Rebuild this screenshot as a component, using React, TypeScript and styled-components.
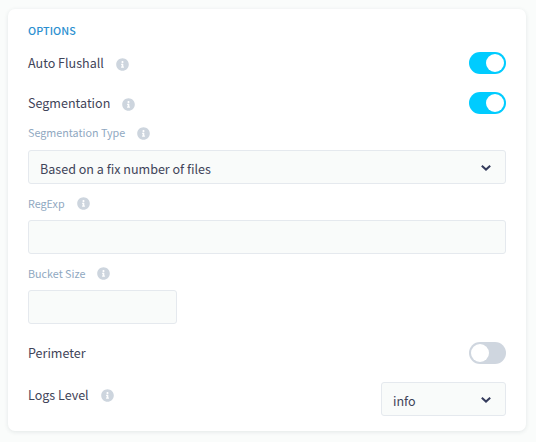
import React from "react";
import styled, { createGlobalStyle } from "styled-components";
import { FaInfoCircle } from "react-icons/fa";

const GlobalStyle = createGlobalStyle`
  * { box-sizing: border-box; }
  body {
    margin: 0;
    background: #fafcfb;
    font-family: "Source Sans Pro", "Noto Sans CJK SC", "Noto Sans", sans-serif;
    color: #3f4459;
  }
`;

const Page = styled.main`
  height: 442px;
  padding: 9px 10px 11px 8px;
  overflow: hidden;
`;

const Card = styled.section`
  height: 422px;
  padding: 12px 20px 15px;
  border-radius: 7px;
  background: #fff;
  box-shadow: 0 1px 4px rgba(40, 60, 70, 0.11);
`;

const Heading = styled.h2`
  margin: 0;
  font-size: 10.75px;
  line-height: 20px;
  font-weight: 500;
  letter-spacing: 0.1px;
  color: #2b8fd0;
`;

const Row = styled.div<{ $top: number; $height?: number }>`
  display: flex;
  align-items: center;
  justify-content: space-between;
  height: ${(p) => p.$height ?? 22}px;
  margin-top: ${(p) => p.$top}px;
`;

const Field = styled.div<{ $top: number }>`
  margin-top: ${(p) => p.$top}px;
`;

const Label = styled.div<{ $small?: boolean; $lift?: number; $bottom?: number }>`
  display: flex;
  align-items: center;
  gap: 12px;
  height: 20px;
  margin-bottom: ${(p) => p.$bottom ?? 0}px;
  white-space: nowrap;
  font-size: ${(p) => (p.$small ? 10.75 : 12.55)}px;
  line-height: 20px;
  color: ${(p) => (p.$small ? "#8fa8c1" : "#3f4459")};

  svg {
    flex: none;
    color: #cdd5de;
    margin-top: ${(p) => Math.max(0, p.$lift ?? 0) * 2}px;
    margin-bottom: ${(p) => Math.max(0, -(p.$lift ?? 0)) * 2}px;
  }
`;

const Toggle = styled.button<{ $on?: boolean }>`
  display: flex;
  align-items: center;
  justify-content: ${(p) => (p.$on ? "flex-end" : "flex-start")};
  width: 37px;
  height: 22px;
  padding: 2px;
  border: 0;
  border-radius: 11px;
  background: ${(p) => (p.$on ? "#00ccff" : "#cfd6df")};
`;

const Knob = styled.span`
  width: 18px;
  height: 18px;
  border-radius: 50%;
  background: #fff;
`;

const Box = styled.div<{ $width?: number; $top?: number }>`
  display: flex;
  align-items: center;
  justify-content: space-between;
  width: ${(p) => (p.$width ? `${p.$width}px` : "100%")};
  height: 34px;
  margin-top: ${(p) => p.$top ?? 0}px;
  padding: 4px 14px 0 11px;
  border: 1px solid #e5e9ee;
  border-radius: 3px;
  background: #f9fbfa;
  font-size: 12.55px;
  line-height: 20px;
`;

const Arrow = styled.span`
  display: flex;
  margin-bottom: 2px;
`;

const Chevron = () => (
  <Arrow>
    <svg width="10" height="6" viewBox="0 0 10 6" fill="none">
      <path d="M0.8 0.8 L5 4.6 L9.2 0.8" stroke="#343b5c" strokeWidth="2" />
    </svg>
  </Arrow>
);

const Info = () => <FaInfoCircle size={13} />;

export default function App() {
  return (
    <>
      <GlobalStyle />
      <Page>
        <Card>
          <Heading>OPTIONS</Heading>
          <Row $top={11}>
            <Label $lift={1}>Auto Flushall <Info /></Label>
            <Toggle $on aria-label="Auto Flushall"><Knob /></Toggle>
          </Row>
          <Row $top={18}>
            <Label $lift={1}>Segmentation <Info /></Label>
            <Toggle $on aria-label="Segmentation"><Knob /></Toggle>
          </Row>
          <Field $top={9}>
            <Label $small>Segmentation Type <Info /></Label>
            <Box $top={7}>
              Based on a fix number of files
              <Chevron />
            </Box>
          </Field>
          <Field $top={10}>
            <Label $small $lift={-1}>RegExp <Info /></Label>
            <Box $top={6} />
          </Field>
          <Field $top={10}>
            <Label $small $lift={-1}>Bucket Size <Info /></Label>
            <Box $top={6} $width={149} />
          </Field>
          <Row $top={18}>
            <Label>Perimeter</Label>
            <Toggle aria-label="Perimeter"><Knob /></Toggle>
          </Row>
          <Row $top={18} $height={34}>
            <Label $bottom={8}>Logs Level <Info /></Label>
            <Box $width={125}>
              info
              <Chevron />
            </Box>
          </Row>
        </Card>
      </Page>
    </>
  );
}
